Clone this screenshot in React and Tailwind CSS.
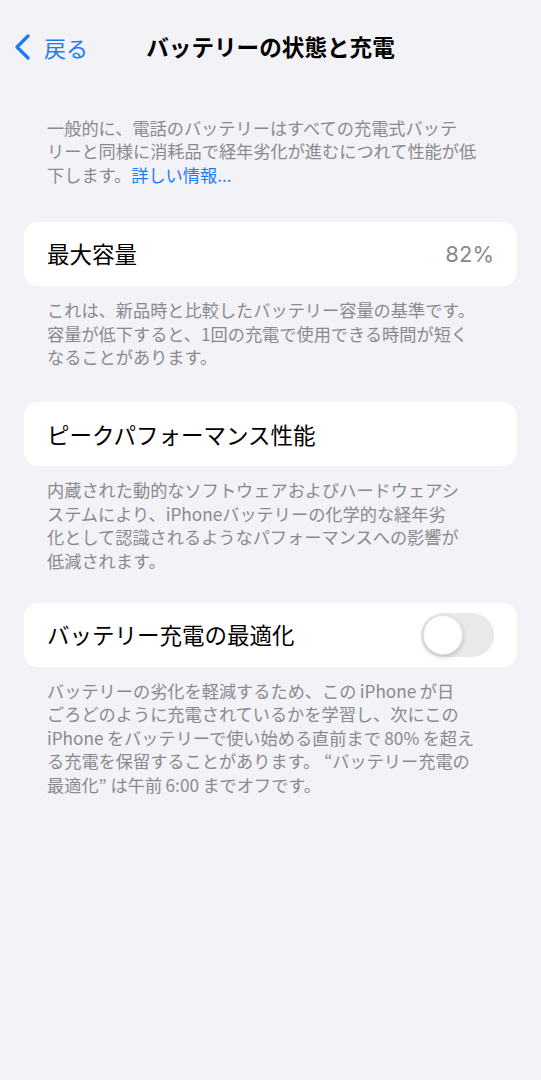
import React, { useState } from 'react';

const font = { fontFamily: '"Noto Sans CJK JP", "Noto Sans", sans-serif' };

const Note = ({ lines }) => (
    <div className="px-[47px] pt-[12px] text-[17.2px] leading-[23.4px] text-[#8a8a8e] whitespace-nowrap">
        {lines.map((line, i) => (
            <div key={i}>{line}</div>
        ))}
    </div>
);

const Card = ({ children }) => (
    <div className="mx-[24px] h-[64px] rounded-[14px] bg-white flex items-center justify-between pl-[23px] pr-[23px]">
        {children}
    </div>
);

const Toggle = ({ on, setOn }) => (
    <button
        onClick={() => setOn(!on)}
        className={`relative w-[73px] h-[44px] rounded-full transition-colors ${on ? 'bg-[#34c759]' : 'bg-[#e9e9eb]'}`}
    >
        <span
            className={`absolute top-[2px] w-[40px] h-[40px] rounded-full bg-white shadow-[0_2px_5px_rgba(0,0,0,0.18)] border border-[#e2e2e2] transition-all ${on ? 'left-[31px]' : 'left-[2px]'}`}
        />
    </button>
);

// thin space between Latin and Japanese runs, as iOS renders it
const t = '\u2009';

export default function App() {
    const [optimized, setOptimized] = useState(false);

    return (
        <div className="w-[541px] h-[1080px] bg-[#f2f2f7] text-black" style={font}>
            {/* Nav bar */}
            <div className="relative h-[96px] flex items-start pt-[30px]">
                <button className="flex items-center text-[#1a7cf5] pl-[13px] h-[34px]">
                    <svg width="18" height="26" viewBox="0 0 18 26" fill="none">
                        <path d="M15 2 L4 13 L15 24" stroke="#1a7cf5" strokeWidth="3.2" strokeLinecap="round" strokeLinejoin="round" />
                    </svg>
                    <span className="ml-[13px] text-[22px] leading-none">戻る</span>
                </button>
                <div className="absolute left-0 right-0 top-[30px] h-[34px] flex items-center justify-center pointer-events-none">
                    <span className="text-[22.6px] font-bold leading-none">バッテリーの状態と充電</span>
                </div>
            </div>

            {/* Intro */}
            <div className="px-[47px] text-[17.2px] leading-[23.4px] text-[#8a8a8e] whitespace-nowrap pt-[20px]">
                <div>一般的に、電話のバッテリーはすべての充電式バッテ</div>
                <div>リーと同様に消耗品で経年劣化が進むにつれて性能が低</div>
                <div>
                    下します。<span className="text-[#1a7cf5]">詳しい情報...</span>
                </div>
            </div>

            {/* Max capacity */}
            <div className="mt-[36px]">
                <Card>
                    <span className="text-[22.5px]">最大容量</span>
                    <span className="text-[22px] text-[#8a8a8e]" style={{ fontFamily: '"Inter", "Noto Sans", sans-serif' }}>82%</span>
                </Card>
                <Note
                    lines={[
                        'これは、新品時と比較したバッテリー容量の基準です。',
                        '容量が低下すると、1回の充電で使用できる時間が短く',
                        'なることがあります。',
                    ]}
                />
            </div>

            {/* Peak performance */}
            <div className="mt-[34px]">
                <Card>
                    <span className="text-[22.5px]">ピークパフォーマンス性能</span>
                </Card>
                <Note
                    lines={[
                        '内蔵された動的なソフトウェアおよびハードウェアシ',
                        `ステムにより、iPhoneバッテリーの化学的な経年劣`,
                        '化として認識されるようなパフォーマンスへの影響が',
                        '低減されます。',
                    ]}
                />
            </div>

            {/* Optimized charging */}
            <div className="mt-[31px]">
                <Card>
                    <span className="text-[22.5px]">バッテリー充電の最適化</span>
                    <Toggle on={optimized} setOn={setOptimized} />
                </Card>
                <Note
                    lines={[
                        `バッテリーの劣化を軽減するため、この${t}iPhone${t}が日`,
                        'ごろどのように充電されているかを学習し、次にこの',
                        `iPhone${t}をバッテリーで使い始める直前まで${t}80%${t}を超え`,
                        'る充電を保留することがあります。 “バッテリー充電の',
                        `最適化” は午前${t}6:00${t}までオフです。`,
                    ]}
                />
            </div>
        </div>
    );
}
